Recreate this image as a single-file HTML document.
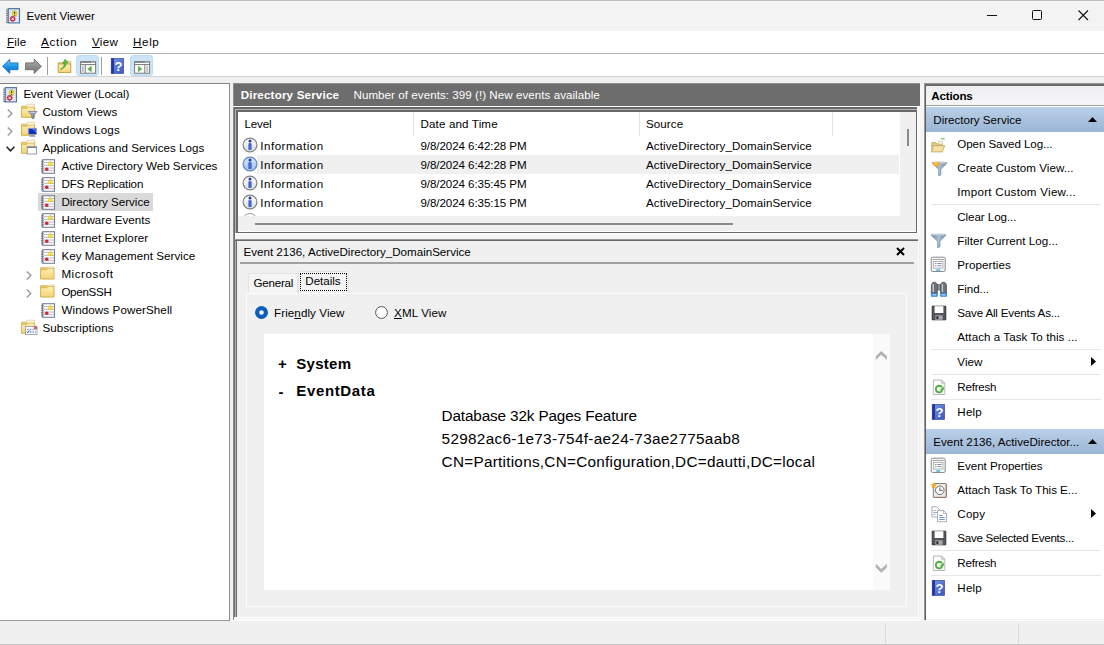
<!DOCTYPE html>
<html><head><meta charset="utf-8"><title>Event Viewer</title>
<style>
*{box-sizing:border-box;margin:0;padding:0}
html,body{width:1104px;height:645px;overflow:hidden;background:#f0f0f0}
body{font-family:"Liberation Sans",sans-serif;font-size:11.6px;color:#000;position:relative}
.a{position:absolute}
.t{position:absolute;white-space:nowrap;line-height:18px;height:18px}
.b{font-weight:bold}
u{text-decoration:underline;text-underline-offset:1px}
svg{position:absolute;overflow:visible}
</style></head><body>
<svg width="0" height="0" style="left:0;top:0"><defs><linearGradient id="gb" x1="0" y1="0" x2="0" y2="1"><stop offset="0" stop-color="#6ccdf8"/><stop offset=".5" stop-color="#1d97e6"/><stop offset="1" stop-color="#0a62c4"/></linearGradient><linearGradient id="gg" x1="0" y1="0" x2="0" y2="1"><stop offset="0" stop-color="#b4b4b4"/><stop offset=".5" stop-color="#8e8e8e"/><stop offset="1" stop-color="#767676"/></linearGradient><linearGradient id="gf" x1="0" y1="0" x2="0" y2="1"><stop offset="0" stop-color="#fdeeb4"/><stop offset="1" stop-color="#f3d474"/></linearGradient><linearGradient id="gi" x1="0" y1="0" x2="0" y2="1"><stop offset="0" stop-color="#ffffff"/><stop offset="1" stop-color="#d8dce2"/></linearGradient><linearGradient id="gis" x1="0" y1="0" x2="0" y2="1"><stop offset="0" stop-color="#d8eafc"/><stop offset="1" stop-color="#9cc0ea"/></linearGradient><linearGradient id="gh" x1="0" y1="0" x2="1" y2="1"><stop offset="0" stop-color="#7c98e8"/><stop offset="1" stop-color="#3a55c0"/></linearGradient><linearGradient id="gfu" x1="0" y1="0" x2="1" y2="0"><stop offset="0" stop-color="#5f7f9f"/><stop offset=".5" stop-color="#a9bfd3"/><stop offset="1" stop-color="#6f8dab"/></linearGradient></defs></svg>
<div class="a" style="left:0px;top:0px;width:1104px;height:31px;background:#f3f3f3;border-top:1px solid #bdbdbd"></div>
<svg style="left:5px;top:7.7px" width="16" height="16" viewBox="0 0 16 16"><rect x="3.2" y=".6" width="11.3" height="14.300" fill="#c9dbf5" stroke="#54749f" stroke-width="1.100"/><path d="M4.500 3.500h9M4.500 5.500h9M4.500 7.500h9M4.500 9.500h9M4.500 11.500h9M4.500 13.300h9" stroke="#f4f8fe" stroke-width=".9"/><path d="M1 2h2.500M1 3.800h2.500M1 5.600h2.500M1 7.400h2.500M1 9.200h2.500M1 11h2.500M1 12.800h2.500M1 14.500h2.500" stroke="#6e6e76" stroke-width=".9"/><ellipse cx="9.600" cy="5.500" rx="2.500" ry="2.900" fill="#f3dc3a" stroke="#c0a820" stroke-width=".5"/><path d="M9.600 3.700v2.300M9.600 6.900v.9" stroke="#222" stroke-width="1"/><circle cx="7.700" cy="10.800" r="2.600" fill="#d42c44" stroke="#a41c30" stroke-width=".4"/><path d="M6.500 9.600l2.400 2.400M8.900 9.600l-2.400 2.400" stroke="#fff" stroke-width="1"/></svg>
<div class="t" style="left:26.5px;top:6.5px;;letter-spacing:0.017px">Event Viewer</div>
<svg style="left:980px;top:5px" width="120" height="22" viewBox="0 0 120 22"><path d="M7 10.5h10" stroke="#111" stroke-width="1" fill="none"/><rect x="52.5" y="5.5" width="9" height="9" rx="1" fill="none" stroke="#111" stroke-width="1"/><path d="M98.5 5.5l9.5 9.5M108 5.5l-9.5 9.5" stroke="#111" stroke-width="1.1" fill="none"/></svg>
<div class="a" style="left:0px;top:31px;width:1104px;height:23px;background:#fff;border-bottom:1px solid #b2b2b2"></div>
<div class="t" style="left:7px;top:32.5px;;letter-spacing:0.199px"><u>F</u>ile</div>
<div class="t" style="left:41px;top:32.5px;;letter-spacing:0.713px"><u>A</u>ction</div>
<div class="t" style="left:92px;top:32.5px;;letter-spacing:0.288px"><u>V</u>iew</div>
<div class="t" style="left:133px;top:32.5px;;letter-spacing:0.647px"><u>H</u>elp</div>
<div class="a" style="left:0px;top:54px;width:1104px;height:23px;background:#fff;border-bottom:1px solid #d4d4d4"></div>
<svg style="left:1.6px;top:58px" width="17" height="17" viewBox="0 0 17 17"><path d="M.6 8.300L7.800 1.200v3.700h8.200v6.800H7.800v3.700z" fill="url(#gb)" stroke="#1a74c4" stroke-width=".9" stroke-linejoin="round"/></svg>
<svg style="left:24.6px;top:58px" width="17" height="17" viewBox="0 0 17 17"><path d="M16.400 8.300L9.200 1.200v3.700H.6v6.800h8.600v3.700z" fill="url(#gg)" stroke="#686868" stroke-width=".9" stroke-linejoin="round"/></svg>
<div class="a" style="left:47px;top:57px;width:1px;height:18px;background:#a0a0a0;"></div>
<svg style="left:56.8px;top:58.4px" width="16" height="16" viewBox="0 0 16 16"><path d="M1.300 4.800h5.200l1-1.200h6.200v10.900H1.300z" fill="#f1cf6c" stroke="#c89c48" stroke-width=".8"/><path d="M9.500 3.300h4v2h-4z" fill="#fdf8e4" stroke="#c8b070" stroke-width=".5"/><path d="M1.300 6h12.400v8.500H1.300z" fill="url(#gf)" stroke="#c89c48" stroke-width=".8"/><path d="M3.200 11.500c2.800-1.200 4-3.600 4.200-6.500l-1.900.6L8 1.200l3.400 3.200-1.800.3c-.3 3.400-2.600 6-6.400 6.800z" fill="#58c23c" stroke="#38962a" stroke-width=".5"/></svg>
<div class="a" style="left:76px;top:55px;width:23px;height:21px;background:#cce4f7;border:1px solid #bcdcf6;border-radius:3px"></div>
<svg style="left:80px;top:58px" width="16" height="16" viewBox="0 0 16 16"><rect x=".6" y="3.600" width="15" height="11.600" fill="#fff" stroke="#787878" stroke-width="1"/><path d="M.6 4.300h15" stroke="#8a8a8a" stroke-width="1.400"/><path d="M.6 6.600h15" stroke="#787878" stroke-width="1"/><path d="M11.500 4.200h1.200M13.500 4.200h1.200" stroke="#fff" stroke-width=".8"/><path d="M5.200 7v8" stroke="#787878" stroke-width="1"/><path d="M1.800 9h2M1.800 11h2M1.800 13h2" stroke="#787878" stroke-width=".9"/><path d="M11.300 8.300v5.400L7.800 11z" fill="#58b83c" stroke="#3c9428" stroke-width=".5"/></svg>
<div class="a" style="left:101px;top:57px;width:1px;height:18px;background:#a0a0a0;"></div>
<svg style="left:110px;top:58px" width="16" height="16" viewBox="0 0 16 16"><rect x="1.200" y=".3" width="12.400" height="15.200" fill="url(#gh)" stroke="#2c3e9c" stroke-width=".6"/><rect x="1.200" y=".3" width="2.800" height="15.200" fill="#24389c"/><text x="8.600" y="12.800" font-family="Liberation Sans,sans-serif" font-size="13" font-weight="bold" fill="#fff" text-anchor="middle">?</text></svg>
<div class="a" style="left:130px;top:55px;width:23px;height:21px;background:#cce4f7;border:1px solid #bcdcf6;border-radius:3px"></div>
<svg style="left:134px;top:58px" width="16" height="16" viewBox="0 0 16 16"><rect x=".6" y="3.600" width="15" height="11.600" fill="#fff" stroke="#787878" stroke-width="1"/><path d="M.6 4.300h15" stroke="#8a8a8a" stroke-width="1.400"/><path d="M.6 6.600h15" stroke="#787878" stroke-width="1"/><path d="M11.500 4.200h1.200M13.500 4.200h1.200" stroke="#fff" stroke-width=".8"/><path d="M10.800 7v8" stroke="#787878" stroke-width="1"/><path d="M12.200 9h2M12.200 11h2M12.200 13h2" stroke="#787878" stroke-width=".9"/><path d="M4.300 8.300v5.400L7.800 11z" fill="#58b83c" stroke="#3c9428" stroke-width=".5"/></svg>
<div class="a" style="left:0px;top:83px;width:230px;height:538px;background:#fff;border-top:1px solid #828282;border-right:1px solid #8c8c8c;border-bottom:1px solid #9a9a9a"></div>
<svg style="left:2px;top:86.5px" width="16" height="16" viewBox="0 0 16 16"><rect x="3.2" y=".6" width="11.3" height="14.300" fill="#c9dbf5" stroke="#54749f" stroke-width="1.100"/><path d="M4.500 3.500h9M4.500 5.500h9M4.500 7.500h9M4.500 9.500h9M4.500 11.500h9M4.500 13.300h9" stroke="#f4f8fe" stroke-width=".9"/><path d="M1 2h2.500M1 3.800h2.500M1 5.600h2.500M1 7.400h2.500M1 9.200h2.500M1 11h2.500M1 12.800h2.500M1 14.500h2.500" stroke="#6e6e76" stroke-width=".9"/><ellipse cx="9.600" cy="5.500" rx="2.500" ry="2.900" fill="#f3dc3a" stroke="#c0a820" stroke-width=".5"/><path d="M9.600 3.700v2.300M9.600 6.900v.9" stroke="#222" stroke-width="1"/><circle cx="7.700" cy="10.800" r="2.600" fill="#d42c44" stroke="#a41c30" stroke-width=".4"/><path d="M6.500 9.600l2.400 2.400M8.900 9.600l-2.400 2.400" stroke="#fff" stroke-width="1"/></svg>
<div class="t" style="left:23.4px;top:85.0px;;letter-spacing:-0.040px">Event Viewer (Local)</div>
<svg style="left:6.8px;top:109.3px" width="6" height="9" viewBox="0 0 6 9"><path d="M.8 .6l4 3.900-4 3.900" stroke="#9c9c9c" stroke-width="1.400" fill="none"/></svg>
<svg style="left:20.8px;top:103.1px" width="16" height="16" viewBox="0 0 16 16"><path d="M.6 3.200h5.200l1 1.300h6.800v9.700h-13z" fill="#eccb62" stroke="#d0ab4c" stroke-width=".7"/><path d="M6 1.200h7.400v3.500h-7.400z" fill="#fdf8e4" stroke="#d5bf7c" stroke-width=".6"/><path d="M.6 5.300h5.500l1-1.200h6.500v10.100h-13z" fill="url(#gf)" stroke="#d0ab4c" stroke-width=".7"/><path d="M7.500 8.600h8.500l-3.300 3.400v3.800l-1.900-.9v-2.900z" fill="#8fa3be" stroke="#4f6486" stroke-width=".7"/><path d="M8.600 9.300h6.200" stroke="#dfe7f2" stroke-width=".8"/></svg>
<div class="t" style="left:42.4px;top:103.0px;;letter-spacing:0.083px">Custom Views</div>
<svg style="left:6.8px;top:127.3px" width="6" height="9" viewBox="0 0 6 9"><path d="M.8 .6l4 3.900-4 3.900" stroke="#9c9c9c" stroke-width="1.400" fill="none"/></svg>
<svg style="left:20.8px;top:121.1px" width="16" height="16" viewBox="0 0 16 16"><path d="M.6 3.200h5.200l1 1.300h6.800v9.700h-13z" fill="#eccb62" stroke="#d0ab4c" stroke-width=".7"/><path d="M6 1.200h7.400v3.500h-7.400z" fill="#fdf8e4" stroke="#d5bf7c" stroke-width=".6"/><path d="M.6 5.300h5.500l1-1.200h6.500v10.100h-13z" fill="url(#gf)" stroke="#d0ab4c" stroke-width=".7"/><rect x="7.300" y="7.300" width="8.200" height="6.200" fill="#1030c0" stroke="#98a4c4" stroke-width=".9"/><path d="M10.500 7.800h4.500v3.500z" fill="#5878e8" opacity=".8"/><path d="M8.500 15.200h6" stroke="#8c8c94" stroke-width="1"/><path d="M10.500 13.800h2v1h-2z" fill="#8c8c94"/></svg>
<div class="t" style="left:42.4px;top:121.0px;;letter-spacing:0.172px">Windows Logs</div>
<svg style="left:5.6px;top:145.7px" width="9" height="6" viewBox="0 0 9 6"><path d="M.6 .8l3.900 4 3.900-4" stroke="#262626" stroke-width="1.600" fill="none"/></svg>
<svg style="left:20.8px;top:139.1px" width="16" height="16" viewBox="0 0 16 16"><path d="M.6 3.200h5.200l1 1.300h6.800v9.700h-13z" fill="#eccb62" stroke="#d0ab4c" stroke-width=".7"/><path d="M6 1.200h7.400v3.500h-7.400z" fill="#fdf8e4" stroke="#d5bf7c" stroke-width=".6"/><path d="M.6 5.300h5.500l1-1.200h6.500v10.100h-13z" fill="url(#gf)" stroke="#d0ab4c" stroke-width=".7"/><rect x="6.200" y="7.700" width="9.300" height="7.300" fill="#fff" stroke="#8c92a4" stroke-width=".9"/><path d="M6.200 8.400h9.300" stroke="#7a84a0" stroke-width="1.300"/></svg>
<div class="t" style="left:42.4px;top:139.0px;;letter-spacing:0.027px">Applications and Services Logs</div>
<svg style="left:40px;top:158.0px" width="16" height="17" viewBox="0 0 16 17"><rect x="2.700" y="1.700" width="11.800" height="13.600" fill="#fff" stroke="#78809c" stroke-width="1.100"/><path d="M1 3.200h2.500M1 5h2.500M1 6.800h2.500M1 8.600h2.500M1 10.400h2.500M1 12.200h2.500M1 14h2.500" stroke="#666a78" stroke-width=".9"/><path d="M4 4.600h10M4 7.300h10M4 10h10M4 12.700h10" stroke="#a4a8b4" stroke-width=".8"/><path d="M10.300 2.800l2.700 4.700H7.600z" fill="#fbe23c" stroke="#d4b820" stroke-width=".5"/><circle cx="6.700" cy="11.300" r="1.800" fill="#c8283c"/></svg>
<div class="t" style="left:61.4px;top:157.0px;;letter-spacing:0.011px">Active Directory Web Services</div>
<svg style="left:40px;top:176.0px" width="16" height="17" viewBox="0 0 16 17"><rect x="2.700" y="1.700" width="11.800" height="13.600" fill="#fff" stroke="#78809c" stroke-width="1.100"/><path d="M1 3.200h2.500M1 5h2.500M1 6.800h2.500M1 8.600h2.500M1 10.400h2.500M1 12.200h2.500M1 14h2.500" stroke="#666a78" stroke-width=".9"/><path d="M4 4.600h10M4 7.300h10M4 10h10M4 12.700h10" stroke="#a4a8b4" stroke-width=".8"/><path d="M10.300 2.800l2.700 4.700H7.600z" fill="#fbe23c" stroke="#d4b820" stroke-width=".5"/><circle cx="6.700" cy="11.300" r="1.800" fill="#c8283c"/></svg>
<div class="t" style="left:61.4px;top:175.0px;;letter-spacing:-0.127px">DFS Replication</div>
<div class="a" style="left:38px;top:193.0px;width:115px;height:17.5px;background:#d9d9d9;"></div>
<svg style="left:40px;top:194.0px" width="16" height="17" viewBox="0 0 16 17"><rect x="2.700" y="1.700" width="11.800" height="13.600" fill="#fff" stroke="#78809c" stroke-width="1.100"/><path d="M1 3.200h2.500M1 5h2.500M1 6.800h2.500M1 8.600h2.500M1 10.400h2.500M1 12.200h2.500M1 14h2.500" stroke="#666a78" stroke-width=".9"/><path d="M4 4.600h10M4 7.300h10M4 10h10M4 12.700h10" stroke="#a4a8b4" stroke-width=".8"/><path d="M10.300 2.800l2.700 4.700H7.600z" fill="#fbe23c" stroke="#d4b820" stroke-width=".5"/><circle cx="6.700" cy="11.300" r="1.800" fill="#c8283c"/></svg>
<div class="t" style="left:61.4px;top:193.0px;;letter-spacing:0.002px">Directory Service</div>
<svg style="left:40px;top:212.0px" width="16" height="17" viewBox="0 0 16 17"><rect x="2.700" y="1.700" width="11.800" height="13.600" fill="#fff" stroke="#78809c" stroke-width="1.100"/><path d="M1 3.200h2.500M1 5h2.500M1 6.800h2.500M1 8.600h2.500M1 10.400h2.500M1 12.200h2.500M1 14h2.500" stroke="#666a78" stroke-width=".9"/><path d="M4 4.600h10M4 7.300h10M4 10h10M4 12.700h10" stroke="#a4a8b4" stroke-width=".8"/><path d="M10.300 2.800l2.700 4.700H7.600z" fill="#fbe23c" stroke="#d4b820" stroke-width=".5"/><circle cx="6.700" cy="11.300" r="1.800" fill="#c8283c"/></svg>
<div class="t" style="left:61.4px;top:211.0px;;letter-spacing:-0.010px">Hardware Events</div>
<svg style="left:40px;top:230.0px" width="16" height="17" viewBox="0 0 16 17"><rect x="2.700" y="1.700" width="11.800" height="13.600" fill="#fff" stroke="#78809c" stroke-width="1.100"/><path d="M1 3.200h2.500M1 5h2.500M1 6.800h2.500M1 8.600h2.500M1 10.400h2.500M1 12.200h2.500M1 14h2.500" stroke="#666a78" stroke-width=".9"/><path d="M4 4.600h10M4 7.300h10M4 10h10M4 12.700h10" stroke="#a4a8b4" stroke-width=".8"/><path d="M10.300 2.800l2.700 4.700H7.600z" fill="#fbe23c" stroke="#d4b820" stroke-width=".5"/><circle cx="6.700" cy="11.300" r="1.800" fill="#c8283c"/></svg>
<div class="t" style="left:61.4px;top:229.0px;;letter-spacing:0.068px">Internet Explorer</div>
<svg style="left:40px;top:248.0px" width="16" height="17" viewBox="0 0 16 17"><rect x="2.700" y="1.700" width="11.800" height="13.600" fill="#fff" stroke="#78809c" stroke-width="1.100"/><path d="M1 3.200h2.500M1 5h2.500M1 6.800h2.500M1 8.600h2.500M1 10.400h2.500M1 12.200h2.500M1 14h2.500" stroke="#666a78" stroke-width=".9"/><path d="M4 4.600h10M4 7.300h10M4 10h10M4 12.700h10" stroke="#a4a8b4" stroke-width=".8"/><path d="M10.300 2.800l2.700 4.700H7.600z" fill="#fbe23c" stroke="#d4b820" stroke-width=".5"/><circle cx="6.700" cy="11.300" r="1.800" fill="#c8283c"/></svg>
<div class="t" style="left:61.4px;top:247.0px;;letter-spacing:0.049px">Key Management Service</div>
<svg style="left:26.2px;top:271.3px" width="6" height="9" viewBox="0 0 6 9"><path d="M.8 .6l4 3.900-4 3.900" stroke="#9c9c9c" stroke-width="1.400" fill="none"/></svg>
<svg style="left:40px;top:264.8px" width="16" height="16" viewBox="0 0 16 16"><path d="M.6 2.700h13.300v11.200h-13.300z" fill="#eccb62" stroke="#d0ab4c" stroke-width=".7"/><path d="M7.500 2h6v2.500h-6z" fill="#fdf8e4" stroke="#d5bf7c" stroke-width=".6"/><path d="M.6 4.800h6.200l1.200-1.300h5.900v10.400h-13.300z" fill="url(#gf)" stroke="#d0ab4c" stroke-width=".7"/></svg>
<div class="t" style="left:61.4px;top:265.0px;;letter-spacing:0.559px">Microsoft</div>
<svg style="left:26.2px;top:289.3px" width="6" height="9" viewBox="0 0 6 9"><path d="M.8 .6l4 3.900-4 3.900" stroke="#9c9c9c" stroke-width="1.400" fill="none"/></svg>
<svg style="left:40px;top:282.8px" width="16" height="16" viewBox="0 0 16 16"><path d="M.6 2.700h13.300v11.200h-13.300z" fill="#eccb62" stroke="#d0ab4c" stroke-width=".7"/><path d="M7.500 2h6v2.500h-6z" fill="#fdf8e4" stroke="#d5bf7c" stroke-width=".6"/><path d="M.6 4.800h6.200l1.200-1.300h5.900v10.400h-13.300z" fill="url(#gf)" stroke="#d0ab4c" stroke-width=".7"/></svg>
<div class="t" style="left:61.4px;top:283.0px;;letter-spacing:-0.284px">OpenSSH</div>
<svg style="left:40px;top:302.0px" width="16" height="17" viewBox="0 0 16 17"><rect x="2.700" y="1.700" width="11.800" height="13.600" fill="#fff" stroke="#78809c" stroke-width="1.100"/><path d="M1 3.200h2.500M1 5h2.500M1 6.800h2.500M1 8.600h2.500M1 10.400h2.500M1 12.200h2.500M1 14h2.500" stroke="#666a78" stroke-width=".9"/><path d="M4 4.600h10M4 7.300h10M4 10h10M4 12.700h10" stroke="#a4a8b4" stroke-width=".8"/><path d="M10.300 2.800l2.700 4.700H7.600z" fill="#fbe23c" stroke="#d4b820" stroke-width=".5"/><circle cx="6.700" cy="11.300" r="1.800" fill="#c8283c"/></svg>
<div class="t" style="left:61.4px;top:301.0px;;letter-spacing:0.111px">Windows PowerShell</div>
<svg style="left:20.8px;top:319.1px" width="16" height="17" viewBox="0 0 16 17"><path d="M.6 3.200h5.200l1 1.300h6.800v9.700h-13z" fill="#eccb62" stroke="#d0ab4c" stroke-width=".7"/><path d="M6 1.200h7.400v3.500h-7.400z" fill="#fdf8e4" stroke="#d5bf7c" stroke-width=".6"/><path d="M.6 5.300h5.500l1-1.200h6.500v10.100h-13z" fill="url(#gf)" stroke="#d0ab4c" stroke-width=".7"/><rect x="4.500" y="7.500" width="11.500" height="8" fill="#fff" stroke="#9aa0b0" stroke-width=".9"/><path d="M13 7.500h3v2.800h-3z" fill="#e05058"/><path d="M6 10.500h1.600M8.800 10.500h1.600M11.500 10.500h1.400M8.800 13h1.600M11.500 13h1.400M14 13h1" stroke="#7898d8" stroke-width="1.300"/><path d="M5.800 12.600l1 1.200 1.500-2.200" stroke="#2858c0" stroke-width="1" fill="none"/></svg>
<div class="t" style="left:42.4px;top:319.0px;;letter-spacing:0.133px">Subscriptions</div>
<div class="a" style="left:233px;top:83px;width:687px;height:537px;background:#f0f0f0;border-left:1px solid #8c8c8c;border-top:1px solid #8c8c8c"></div>
<div class="a" style="left:234px;top:84px;width:686px;height:22px;background:#6d6d6d;"></div>
<div class="t" style="left:240.7px;top:85.5px;color:#fff;font-weight:bold;letter-spacing:0.182px">Directory Service</div>
<div class="t" style="left:353.5px;top:85.5px;color:#fff;letter-spacing:0.046px">Number of events: 399 (!) New events available</div>
<div class="a" style="left:234px;top:107px;width:1px;height:510px;background:#696969;"></div>
<div class="a" style="left:233px;top:106px;width:687px;height:1px;background:#fff;"></div>
<div class="a" style="left:235px;top:109px;width:1px;height:508px;background:#b4b4b4;"></div>
<div class="a" style="left:234px;top:107px;width:684px;height:2px;background:#696969;"></div>
<div class="a" style="left:235px;top:109px;width:683px;height:1px;background:#b4b4b4;"></div>
<div class="a" style="left:236px;top:110px;width:681px;height:2px;background:#696969;"></div>
<div class="a" style="left:236px;top:110px;width:2px;height:123px;background:#696969;"></div>
<div class="a" style="left:916px;top:110px;width:1px;height:123px;background:#696969;"></div>
<div class="a" style="left:917px;top:107px;width:3px;height:126px;background:#fafafa;"></div>
<div class="a" style="left:920px;top:84px;width:4px;height:535px;background:#f6f6f6;"></div>
<div class="a" style="left:238px;top:231px;width:678px;height:1px;background:#fff;"></div>
<div class="a" style="left:236px;top:232px;width:681px;height:1px;background:#696969;"></div>
<div class="a" style="left:236px;top:617px;width:684px;height:1px;background:#fff;"></div>
<div class="a" style="left:234px;top:619px;width:686px;height:1px;background:#fff;"></div>
<div class="a" style="left:918px;top:240px;width:1px;height:378px;background:#fafafa;"></div>
<div class="a" style="left:238px;top:112px;width:662px;height:104px;background:#fff;"></div>
<div class="a" style="left:413px;top:112px;width:1px;height:24px;background:#e5e5e5;"></div>
<div class="a" style="left:639px;top:112px;width:1px;height:24px;background:#e5e5e5;"></div>
<div class="a" style="left:832px;top:112px;width:1px;height:24px;background:#e5e5e5;"></div>
<div class="t" style="left:244.5px;top:114.5px;;letter-spacing:-0.155px">Level</div>
<div class="t" style="left:420.5px;top:114.5px;;letter-spacing:0.141px">Date and Time</div>
<div class="t" style="left:646px;top:114.5px;;letter-spacing:0.073px">Source</div>
<svg style="left:241.5px;top:136.7px" width="16" height="16" viewBox="0 0 16 16"><circle cx="8" cy="8" r="6.900" fill="url(#gi)" stroke="#808080" stroke-width="1.200"/><circle cx="8" cy="3.900" r="1.500" fill="#1a3cb4"/><path d="M6.500 6.300h3v6.600H6.500z" fill="#2448c0"/><path d="M7.600 6.300h.9v6.600h-.9z" fill="#6c8ce0"/></svg>
<div class="t" style="left:260.3px;top:136.7px;;letter-spacing:0.480px">Information</div>
<div class="t" style="left:420.5px;top:136.7px;;letter-spacing:-0.086px">9/8/2024 6:42:28 PM</div>
<div class="t" style="left:646px;top:136.7px;;letter-spacing:0.099px">ActiveDirectory_DomainService</div>
<div class="a" style="left:257px;top:155.0px;width:642px;height:19px;background:#f0f0f0;"></div>
<svg style="left:241.5px;top:155.7px" width="16" height="16" viewBox="0 0 16 16"><circle cx="8" cy="8" r="6.900" fill="url(#gis)" stroke="#6484ac" stroke-width="1.200"/><circle cx="8" cy="3.900" r="1.500" fill="#1a3cb4"/><path d="M6.500 6.300h3v6.600H6.500z" fill="#2448c0"/><path d="M7.600 6.300h.9v6.600h-.9z" fill="#6c8ce0"/></svg>
<div class="t" style="left:260.3px;top:155.7px;;letter-spacing:0.480px">Information</div>
<div class="t" style="left:420.5px;top:155.7px;;letter-spacing:-0.086px">9/8/2024 6:42:28 PM</div>
<div class="t" style="left:646px;top:155.7px;;letter-spacing:0.099px">ActiveDirectory_DomainService</div>
<svg style="left:241.5px;top:174.7px" width="16" height="16" viewBox="0 0 16 16"><circle cx="8" cy="8" r="6.900" fill="url(#gi)" stroke="#808080" stroke-width="1.200"/><circle cx="8" cy="3.900" r="1.500" fill="#1a3cb4"/><path d="M6.500 6.300h3v6.600H6.500z" fill="#2448c0"/><path d="M7.600 6.300h.9v6.600h-.9z" fill="#6c8ce0"/></svg>
<div class="t" style="left:260.3px;top:174.7px;;letter-spacing:0.480px">Information</div>
<div class="t" style="left:420.5px;top:174.7px;;letter-spacing:-0.086px">9/8/2024 6:35:45 PM</div>
<div class="t" style="left:646px;top:174.7px;;letter-spacing:0.099px">ActiveDirectory_DomainService</div>
<svg style="left:241.5px;top:193.7px" width="16" height="16" viewBox="0 0 16 16"><circle cx="8" cy="8" r="6.900" fill="url(#gi)" stroke="#808080" stroke-width="1.200"/><circle cx="8" cy="3.900" r="1.500" fill="#1a3cb4"/><path d="M6.500 6.300h3v6.600H6.500z" fill="#2448c0"/><path d="M7.600 6.300h.9v6.600h-.9z" fill="#6c8ce0"/></svg>
<div class="t" style="left:260.3px;top:193.7px;;letter-spacing:0.480px">Information</div>
<div class="t" style="left:420.5px;top:193.7px;;letter-spacing:-0.086px">9/8/2024 6:35:15 PM</div>
<div class="t" style="left:646px;top:193.7px;;letter-spacing:0.099px">ActiveDirectory_DomainService</div>
<div class="a" style="left:241.5px;top:212.500px;width:16px;height:3.500px;overflow:hidden"><div class="a" style="left:0;top:0;width:16px;height:16px;border:1px solid #9a9a9a;border-radius:8px"></div></div>
<div class="a" style="left:907px;top:129px;width:2px;height:17px;background:#8a8a8a;"></div>
<div class="a" style="left:255px;top:223px;width:478px;height:2px;background:#8a8a8a;"></div>
<div class="a" style="left:235px;top:233px;width:685px;height:6px;background:#f6f6f6;"></div>
<div class="a" style="left:235px;top:233px;width:685px;height:1px;background:#fff;"></div>
<div class="a" style="left:234px;top:239px;width:684px;height:1px;background:#9a9a9a;"></div>
<div class="a" style="left:234px;top:240px;width:684px;height:1px;background:#696969;"></div>
<div class="a" style="left:236px;top:240px;width:1px;height:377px;background:#696969;"></div>
<div class="t" style="left:243.5px;top:242.5px;;letter-spacing:-0.005px">Event 2136, ActiveDirectory_DomainService</div>
<svg style="left:896px;top:247px" width="9" height="9" viewBox="0 0 9 9"><path d="M1 1l7 7M8 1l-7 7" stroke="#000" stroke-width="2" fill="none"/></svg>
<div class="a" style="left:240px;top:262px;width:674px;height:2px;background:#a0a0a0;"></div>
<div class="a" style="left:248px;top:273px;width:50px;height:20px;background:#f5f5f5;border:1px solid #e3e3e3;border-bottom:none"></div>
<div class="a" style="left:298px;top:271px;width:51px;height:22px;background:#f3f3f3;border:1px solid #e3e3e3;border-bottom:none"></div>
<div class="a" style="left:300px;top:273px;width:47px;height:18px;background:transparent;border:1px dotted #000"></div>
<div class="t" style="left:253.5px;top:273.5px;;letter-spacing:-0.242px">General</div>
<div class="t" style="left:305.3px;top:271.5px;;letter-spacing:-0.026px">Details</div>
<div class="a" style="left:246px;top:293px;width:661px;height:314px;background:#f0f0f0;border:1px solid #fcfcfc"></div>
<svg style="left:255px;top:305.800px" width="13" height="13" viewBox="0 0 13 13"><circle cx="6.500" cy="6.500" r="4.400" fill="#fff" stroke="#0a5fb8" stroke-width="4.200"/></svg>
<div class="t" style="left:274px;top:303.5px;;letter-spacing:0.092px">Frie<u>n</u>dly View</div>
<svg style="left:374.700px;top:305.800px" width="13" height="13" viewBox="0 0 13 13"><circle cx="6.5" cy="6.5" r="5.9" fill="#fff" stroke="#555" stroke-width="1"/></svg>
<div class="t" style="left:394px;top:303.5px;;letter-spacing:0.134px"><u>X</u>ML View</div>
<div class="a" style="left:264px;top:334px;width:626px;height:256px;background:#fff;"></div>
<div class="a" style="left:873px;top:334px;width:17px;height:256px;background:#fafafa;"></div>
<svg style="left:875px;top:350px" width="13" height="11" viewBox="0 0 13 11"><path d="M6.300 1l5.600 5.300v3.700L6.300 4.800.8 10V6.300z" fill="#b2b2b2"/></svg>
<svg style="left:875px;top:563px" width="13" height="11" viewBox="0 0 13 11"><path d="M6.300 9.700l5.600-5.300V.7L6.300 5.900.8 .7v3.700z" fill="#b2b2b2"/></svg>
<div class="t" style="left:278px;top:354.5px;font-size:15px;font-weight:bold;">+</div>
<div class="t" style="left:296.3px;top:354.5px;font-size:15px;font-weight:bold;letter-spacing:0.285px">System</div>
<div class="t" style="left:278.4px;top:382.5px;font-size:15px;font-weight:bold;">-</div>
<div class="t" style="left:296.3px;top:381.5px;font-size:15px;font-weight:bold;letter-spacing:0.643px">EventData</div>
<div class="t" style="left:441.6px;top:407.0px;font-size:15.3px;letter-spacing:-0.140px">Database 32k Pages Feature</div>
<div class="t" style="left:441.6px;top:430.0px;font-size:15.3px;letter-spacing:0.306px">52982ac6-1e73-754f-ae24-73ae2775aab8</div>
<div class="t" style="left:441.6px;top:453.0px;font-size:15.3px;letter-spacing:0.265px">CN=Partitions,CN=Configuration,DC=dautti,DC=local</div>
<div class="a" style="left:924px;top:83px;width:180px;height:536px;background:#fff;"></div>
<div class="a" style="left:924px;top:83px;width:1px;height:537px;background:#9a9a9a;"></div>
<div class="a" style="left:925px;top:83px;width:1px;height:537px;background:#5e5e5e;"></div>
<div class="a" style="left:924px;top:83px;width:180px;height:1px;background:#9a9a9a;"></div>
<div class="a" style="left:925px;top:84px;width:179px;height:2px;background:#696969;"></div>
<div class="a" style="left:926px;top:86px;width:178px;height:19px;background:linear-gradient(#eeeef0,#f6f6f8);"></div>
<div class="a" style="left:926px;top:105px;width:178px;height:1px;background:#a0a0a0;"></div>
<div class="a" style="left:926px;top:620px;width:178px;height:1px;background:#fff;"></div>
<div class="t" style="left:931.3px;top:86.5px;font-weight:bold;letter-spacing:-0.169px">Actions</div>
<div class="a" style="left:926px;top:107px;width:178px;height:25px;background:linear-gradient(#bad0e9,#9bb5d4);"></div>
<div class="t" style="left:933.3px;top:111.0px;;letter-spacing:-0.004px">Directory Service</div>
<svg style="left:1088px;top:117px" width="9" height="5" viewBox="0 0 9 5"><path d="M0 5L4.500 0l4.500 5z" fill="#000"/></svg>
<svg style="left:929.8px;top:137.8px" width="16" height="16" viewBox="0 0 16 16"><path d="M1.800 4.600h4l1 1.200h5.400v2.400H1.800z" fill="#e4cc80" stroke="#b49c54" stroke-width=".7"/><path d="M8.500 3.300h3.800v3h-3.800z" fill="#fbf4d8" stroke="#c4b078" stroke-width=".5"/><path d="M3.400 7.600h11.300l-2.300 6.300H1.200z" fill="#f3e2a4" stroke="#b49c54" stroke-width=".7"/><path d="M1.800 8v5" stroke="#b49c54" stroke-width=".7"/><path d="M10.700 .8h4" stroke="#58b458" stroke-width="1"/></svg>
<div class="t" style="left:957.3px;top:135.0px;;letter-spacing:-0.093px">Open Saved Log...</div>
<svg style="left:930.8px;top:159.5px" width="17" height="17" viewBox="0 0 17 17"><path d="M1 2.800c4.600-1 10.400-1 15 0-1.600 2.600-4.800 4.800-6 6.600v5.600l-2.400.7V9.400C6.400 7.600 2.600 5.400 1 2.800z" fill="url(#gfu)" stroke="#5c7894" stroke-width=".5"/><path d="M2.200 3.100c4-.7 8.600-.7 12.600 0" stroke="#d4e0ec" stroke-width="1" fill="none"/><path d="M1 2.900c2.400-.6 5.200-.8 7.600-.6.200 2-.8 4-2.600 4.800C4 6 2 4.600 1 2.900z" fill="#f7a81c"/><ellipse cx="4.600" cy="3.600" rx="2.200" ry="1" fill="#fbc85c"/></svg>
<div class="t" style="left:957.3px;top:159.0px;;letter-spacing:0.053px">Create Custom View...</div>
<div class="t" style="left:957.3px;top:183.0px;;letter-spacing:0.266px">Import Custom View...</div>
<div class="a" style="left:931px;top:204px;width:170px;height:1px;background:#e6e6e6;"></div>
<div class="t" style="left:957.3px;top:208.0px;;letter-spacing:-0.067px">Clear Log...</div>
<svg style="left:930px;top:231.7px" width="17" height="17" viewBox="0 0 17 17"><path d="M1 2.800c4.600-1 10.400-1 15 0-1.600 2.600-4.800 4.800-6 6.600v5.600l-2.400.7V9.400C6.400 7.600 2.600 5.400 1 2.800z" fill="url(#gfu)" stroke="#5c7894" stroke-width=".5"/><path d="M2.200 3.100c4-.7 8.600-.7 12.600 0" stroke="#d4e0ec" stroke-width="1" fill="none"/></svg>
<div class="t" style="left:957.3px;top:232.0px;;letter-spacing:0.046px">Filter Current Log...</div>
<svg style="left:930px;top:256.3px" width="16" height="17" viewBox="0 0 16 17"><rect x="1.200" y="1.200" width="14" height="14.300" rx="1.500" fill="#f6f6f6" stroke="#8a8a8a" stroke-width="1"/><path d="M2.500 3.500h11.400" stroke="#a8a8a8" stroke-width="1"/><rect x="3.500" y="5.500" width="9.400" height="6.500" fill="#fff" stroke="#a4a4a4" stroke-width=".8"/><path d="M5 7.500h1.500M7.500 7.500h4M5 9.700h1.500M7.500 9.700h4" stroke="#7c8cac" stroke-width="1"/><path d="M6.200 14h4" stroke="#3cb4e4" stroke-width="1.400"/></svg>
<div class="t" style="left:957.3px;top:256.0px;;letter-spacing:0.073px">Properties</div>
<svg style="left:930.3px;top:280.8px" width="17" height="17" viewBox="0 0 17 17"><g transform="scale(1.08 1)"><path d="M1.200 6c0-3.200.8-4.800 2.800-4.800S6.800 2.800 6.800 6v6.500H1.200zM9.700 6c0-3.200.8-4.800 2.800-4.800s2.800 1.600 2.800 4.800v6.500H9.700z" fill="#6c7078" stroke="#484c54" stroke-width=".7"/><path d="M3 3v8M11.500 3v8" stroke="#c4c8d0" stroke-width="1.300"/><rect x="6.800" y="3.500" width="2.900" height="5.500" fill="#8c9098" stroke="#484c54" stroke-width=".6"/><path d="M1.200 12.200h5.600v3.200H1.200zM9.700 12.200h5.600v3.200H9.700z" fill="#4c9cec" stroke="#2868c0" stroke-width=".5"/><path d="M2.500 13.800h3M11 13.800h3" stroke="#c4e0fc" stroke-width="1"/></g></svg>
<div class="t" style="left:957.3px;top:280.0px;;letter-spacing:-0.070px">Find...</div>
<svg style="left:931px;top:305.0px" width="16" height="16" viewBox="0 0 16 16"><path d="M1.200 1.200h13.600v13.600H1.200z" fill="#55555c" stroke="#2c2c32" stroke-width=".9"/><rect x="3.600" y="1.200" width="8.800" height="6.800" fill="#fff"/><rect x="4.400" y="10.300" width="7.200" height="4.500" fill="#a8a8b0"/><rect x="5.400" y="11.200" width="2" height="2.900" fill="#2c2c32"/></svg>
<div class="t" style="left:957.3px;top:304.0px;;letter-spacing:-0.177px">Save All Events As...</div>
<div class="t" style="left:957.3px;top:328.0px;;letter-spacing:0.058px">Attach a Task To this ...</div>
<div class="a" style="left:931px;top:349px;width:170px;height:1px;background:#e6e6e6;"></div>
<div class="t" style="left:957.3px;top:353.0px;;letter-spacing:0.093px">View</div>
<svg style="left:1091px;top:357.0px" width="5" height="9" viewBox="0 0 5 9"><path d="M0 0l5 4.5L0 9z" fill="#000"/></svg>
<div class="a" style="left:931px;top:374px;width:170px;height:1px;background:#e6e6e6;"></div>
<svg style="left:931px;top:378.8px" width="16" height="17" viewBox="0 0 16 17"><path d="M2.300 1h8.200l3.300 3.300v11.200H2.300z" fill="#fdfdfd" stroke="#b0b0b0" stroke-width=".9"/><path d="M10.500 1v3.300h3.300z" fill="#e8e8e8" stroke="#b0b0b0" stroke-width=".7"/><path d="M10.900 8.300a3.300 3.300 0 1 0 .3 3" fill="none" stroke="#48b43c" stroke-width="1.900"/><path d="M8.600 11.200h4.200v-4z" fill="#48b43c"/></svg>
<div class="t" style="left:957.3px;top:378.0px;;letter-spacing:-0.235px">Refresh</div>
<div class="a" style="left:931px;top:399px;width:170px;height:1px;background:#e6e6e6;"></div>
<svg style="left:931px;top:403.8px" width="16" height="16" viewBox="0 0 16 16"><rect x="1.200" y=".3" width="12.400" height="15.200" fill="url(#gh)" stroke="#2c3e9c" stroke-width=".6"/><rect x="1.200" y=".3" width="2.800" height="15.200" fill="#24389c"/><text x="8.600" y="12.800" font-family="Liberation Sans,sans-serif" font-size="13" font-weight="bold" fill="#fff" text-anchor="middle">?</text></svg>
<div class="t" style="left:957.3px;top:403.0px;;letter-spacing:0.214px">Help</div>
<div class="a" style="left:926px;top:429px;width:178px;height:25px;background:linear-gradient(#bad0e9,#9bb5d4);"></div>
<div class="t" style="left:933.3px;top:433.0px;;letter-spacing:0.006px">Event 2136, ActiveDirector...</div>
<svg style="left:1088px;top:439px" width="9" height="5" viewBox="0 0 9 5"><path d="M0 5L4.500 0l4.500 5z" fill="#000"/></svg>
<svg style="left:930px;top:457.3px" width="16" height="17" viewBox="0 0 16 17"><rect x="1.200" y="1.200" width="14" height="14.300" rx="1.500" fill="#f6f6f6" stroke="#8a8a8a" stroke-width="1"/><path d="M2.500 3.500h11.400" stroke="#a8a8a8" stroke-width="1"/><rect x="3.500" y="5.500" width="9.400" height="6.500" fill="#fff" stroke="#a4a4a4" stroke-width=".8"/><path d="M5 7.500h1.500M7.500 7.500h4M5 9.700h1.500M7.500 9.700h4" stroke="#7c8cac" stroke-width="1"/><path d="M6.200 14h4" stroke="#3cb4e4" stroke-width="1.400"/></svg>
<div class="t" style="left:957.3px;top:457.0px;;letter-spacing:-0.035px">Event Properties</div>
<svg style="left:930.6px;top:481.8px" width="16" height="17" viewBox="0 0 16 17"><rect x="2.300" y="1.500" width="13" height="14" rx="1" fill="#f0ece8" stroke="#7c7c80" stroke-width="1"/><path d="M2.300 15.300h13M15.300 2v13.300" stroke="#a87c68" stroke-width="1.100" fill="none"/><circle cx="8.800" cy="8.300" r="4.300" fill="#fff" stroke="#6c6c74" stroke-width="1"/><path d="M8.800 5.500v2.900h2.800" stroke="#4c4c54" stroke-width=".9" fill="none"/><path d="M2.800 .2l.9 2 2.200.3-1.600 1.500.4 2.200-1.900-1.100-1.900 1.100.4-2.200L-.3 2.500l2.200-.3z" fill="#f9a81c"/></svg>
<div class="t" style="left:957.3px;top:481.0px;;letter-spacing:-0.014px">Attach Task To This E...</div>
<svg style="left:930.8px;top:505.6px" width="16" height="17" viewBox="0 0 16 17"><path d="M.9 .9h5l2.200 2.200V11H.9z" fill="#fff" stroke="#a4a4ac" stroke-width=".9"/><path d="M2.300 4.500h2.500M2.300 6.500h4M2.300 8.500h2" stroke="#8c9cbc" stroke-width=".9"/><path d="M6.500 4.500h6l3 3v8.200H6.500z" fill="#fff" stroke="#a4a4ac" stroke-width=".9"/><path d="M12.500 4.500v3h3" fill="none" stroke="#a4a4ac" stroke-width=".7"/><path d="M8.300 9.500h3M8.300 11.500h5.500M8.300 13.500h5.500" stroke="#5c8cc4" stroke-width=".9"/></svg>
<div class="t" style="left:957.3px;top:505.0px;;letter-spacing:0.241px">Copy</div>
<svg style="left:1091px;top:509.0px" width="5" height="9" viewBox="0 0 5 9"><path d="M0 0l5 4.5L0 9z" fill="#000"/></svg>
<svg style="left:931px;top:530.0px" width="16" height="16" viewBox="0 0 16 16"><path d="M1.200 1.200h13.600v13.600H1.200z" fill="#55555c" stroke="#2c2c32" stroke-width=".9"/><rect x="3.600" y="1.200" width="8.800" height="6.800" fill="#fff"/><rect x="4.400" y="10.300" width="7.200" height="4.500" fill="#a8a8b0"/><rect x="5.400" y="11.200" width="2" height="2.900" fill="#2c2c32"/></svg>
<div class="t" style="left:957.3px;top:529.0px;;letter-spacing:-0.286px">Save Selected Events...</div>
<div class="a" style="left:931px;top:550px;width:170px;height:1px;background:#e6e6e6;"></div>
<svg style="left:931px;top:554.8px" width="16" height="17" viewBox="0 0 16 17"><path d="M2.300 1h8.200l3.300 3.300v11.200H2.300z" fill="#fdfdfd" stroke="#b0b0b0" stroke-width=".9"/><path d="M10.500 1v3.300h3.300z" fill="#e8e8e8" stroke="#b0b0b0" stroke-width=".7"/><path d="M10.900 8.300a3.300 3.300 0 1 0 .3 3" fill="none" stroke="#48b43c" stroke-width="1.900"/><path d="M8.600 11.200h4.200v-4z" fill="#48b43c"/></svg>
<div class="t" style="left:957.3px;top:554.0px;;letter-spacing:-0.235px">Refresh</div>
<div class="a" style="left:931px;top:575px;width:170px;height:1px;background:#e6e6e6;"></div>
<svg style="left:931px;top:579.8px" width="16" height="16" viewBox="0 0 16 16"><rect x="1.200" y=".3" width="12.400" height="15.200" fill="url(#gh)" stroke="#2c3e9c" stroke-width=".6"/><rect x="1.200" y=".3" width="2.800" height="15.200" fill="#24389c"/><text x="8.600" y="12.800" font-family="Liberation Sans,sans-serif" font-size="13" font-weight="bold" fill="#fff" text-anchor="middle">?</text></svg>
<div class="t" style="left:957.3px;top:579.0px;;letter-spacing:0.214px">Help</div>
<div class="a" style="left:230px;top:620px;width:694px;height:1px;background:#f8f8f8;"></div>
<div class="a" style="left:0px;top:621px;width:1104px;height:24px;background:#f0f0f0;border-bottom:1px solid #c8c8c8"></div>
<div class="a" style="left:885px;top:623px;width:1px;height:21px;background:#dadada;"></div>
<div class="a" style="left:1018px;top:623px;width:1px;height:21px;background:#dadada;"></div>
</body></html>
